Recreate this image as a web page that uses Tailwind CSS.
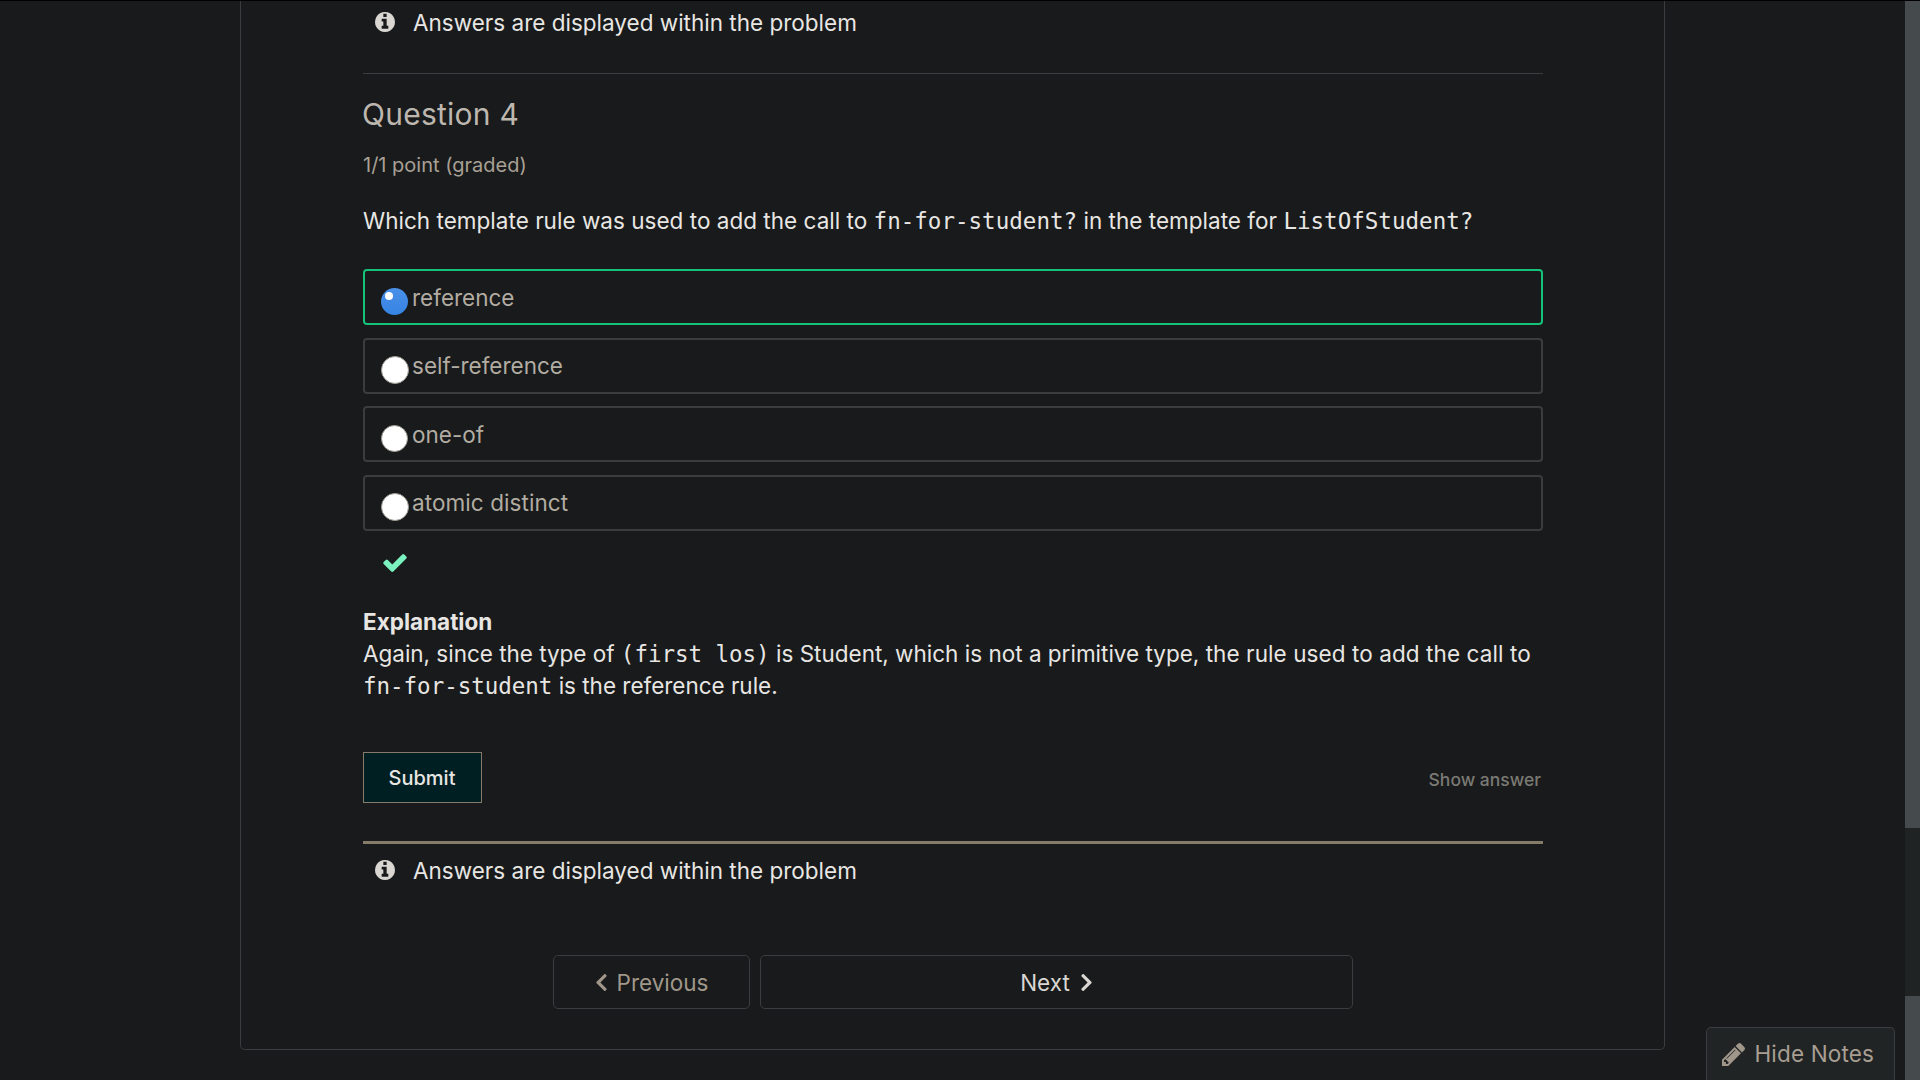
<!DOCTYPE html>
<html lang="en">
<head>
<meta charset="utf-8">
<title>Question 4</title>
<script src="https://cdn.jsdelivr.net/npm/@tailwindcss/browser@4"></script>
</head>
<body class="h-[1080px] w-[1920px] overflow-hidden border-t border-black bg-[#181a1b] font-['Inter',sans-serif] text-[22.5px] leading-8 text-[#e8e6e3]">
<svg class="hidden">
  <symbol id="info" viewBox="128 128 1536 1536"><path d="M1152 1376v-160q0-14-9-23t-23-9h-96v-512q0-14-9-23t-23-9h-320q-14 0-23 9t-9 23v160q0 14 9 23t23 9h96v320h-96q-14 0-23 9t-9 23v160q0 14 9 23t23 9h448q14 0 23-9t9-23zm-128-896v-192q0-14-9-23t-23-9h-192q-14 0-23 9t-9 23v192q0 14 9 23t23 9h192q14 0 23-9t9-23zm640 416q0 209-103 385.5t-279.5 279.5-385.5 103-385.5-103-279.5-279.5-103-385.5 103-385.5 279.5-279.5 385.5-103 385.5 103 279.5 279.5 103 385.5z"/></symbol>
  <symbol id="check" viewBox="121 334 1550 1188"><path d="M1671 566q0 40-28 68l-724 724-136 136q-28 28-68 28t-68-28l-136-136-362-362q-28-28-28-68t28-68l136-136q28-28 68-28t68 28l294 295 656-657q28-28 68-28t68 28l136 136q28 28 28 68z"/></symbol>
  <symbol id="pencil" viewBox="128 149 1515 1515"><path d="M491 1536l91-91-235-235-91 91v107h128v128h107zm523-928q0-22-22-22-10 0-17 7l-542 542q-7 7-7 17 0 22 22 22 10 0 17-7l542-542q7-7 7-17zm-54-192l416 416-832 832h-416v-416zm683 96q0 53-37 90l-166 166-416-416 166-165q36-38 90-38 53 0 91 38l235 234q37 39 37 91z"/></symbol>
  <symbol id="left" viewBox="27.5 37.6 265 436.800"><path d="M34.52 239.03L228.87 44.69c9.37-9.37 24.57-9.37 33.94 0l22.67 22.67c9.36 9.36 9.37 24.52.04 33.9L131.49 256l154.02 154.75c9.34 9.38 9.32 24.54-.04 33.9l-22.67 22.67c-9.37 9.37-24.57 9.37-33.94 0L34.52 272.97c-9.37-9.37-9.37-24.57 0-33.94z"/></symbol>
</svg>
<div class="flex h-[1079px] justify-between">
  <main class="ml-60 h-[1049px] w-[1425px] rounded-b-[5px] border border-t-0 border-[#3a3d3f] pl-[122px] pr-[121px] pt-1.5">
    <div class="flex h-8 items-center pl-3">
      <svg class="mb-0.5 h-5 w-5 fill-[#dad7d2]"><use href="#info"/></svg>
      <span class="ml-[18px]">Answers are displayed within the problem</span>
    </div>
    <hr class="mt-[34px] border-[#3b3e40]">
    <h3 class="mt-5 -ml-px text-[30px] leading-10 tracking-[0.25px] text-[#bdb7af]">Question 4</h3>
    <div class="mt-[17px] text-xl leading-7 text-[#a8a095]">1/1 point (graded)</div>
    <p class="mt-[26px] h-8 whitespace-nowrap tracking-[0.02px]">Which template rule was used to add the call to <code class="font-['DejaVu_Sans_Mono',monospace] leading-none">fn-for-student?</code> in the template for <code class="font-['DejaVu_Sans_Mono',monospace] leading-none">ListOfStudent?</code></p>
    <div class="mt-8 flex flex-col gap-[12.5px] text-[#b2aca2]">
      <label class="flex h-14 rounded-[4px] border-2 border-[#16c179] pl-4 pt-[11px]">
        <span class="mt-1.5 h-[27px] w-[27px] rounded-full bg-linear-to-b from-[#4a90e8] to-[#3584e4] pl-1 pt-1"><span class="block h-2 w-2 rounded-full bg-white"></span></span>
        <span class="ml-1">reference</span>
      </label>
      <label class="flex h-14 rounded-[4px] border-2 border-[#3a3c3e] pl-4 pt-[10.5px]">
        <span class="mt-1.5 h-7 w-7 rounded-full border border-[#9d9991] bg-white"></span>
        <span class="ml-[3px]">self-reference</span>
      </label>
      <label class="flex h-14 rounded-[4px] border-2 border-[#3a3c3e] pl-4 pt-[11px]">
        <span class="mt-1.5 h-[27px] w-[27px] rounded-full border border-[#9d9991] bg-white"></span>
        <span class="ml-1">one-of</span>
      </label>
      <label class="flex h-14 rounded-[4px] border-2 border-[#3a3c3e] pl-4 pt-[10.5px]">
        <span class="mt-1.5 h-7 w-7 rounded-full border border-[#9d9991] bg-white"></span>
        <span class="ml-[3px] tracking-[0.08px]">atomic distinct</span>
      </label>
    </div>
    <svg class="ml-5 mt-[23.5px] h-[18px] w-6 fill-[#7bf1c0]"><use href="#check"/></svg>
    <section class="mt-[34px] whitespace-nowrap">
      <div class="h-8 font-bold">Explanation</div>
      <div class="h-8"><span class="tracking-[-0.02px]">Again, since the type of <code class="font-['DejaVu_Sans_Mono',monospace] leading-none">(first los)</code></span> is Student, which is not a primitive type, <span class="tracking-[0.085px]">the rule used to add the call to</span></div>
      <div class="h-8 tracking-[-0.02px]"><code class="font-['DejaVu_Sans_Mono',monospace] leading-none">fn-for-student</code> is the reference rule.</div>
    </section>
    <div class="mt-[50px] flex h-[51px] items-center justify-between">
      <button class="h-[51px] w-[119px] border border-[#857b6b] bg-[#001f23] pr-px text-xl font-medium">Submit</button>
      <button class="mr-0.5 mt-[5px] text-[17.5px] font-medium text-[#7a7974]">Show answer</button>
    </div>
    <div class="mt-[38px] h-[3px] bg-[#857b69]"></div>
    <div class="mt-[11px] flex h-8 items-center pl-3">
      <svg class="mb-0.5 h-5 w-5 fill-[#dad7d2]"><use href="#info"/></svg>
      <span class="ml-[18px]">Answers are displayed within the problem</span>
    </div>
    <nav class="mt-[68px] flex w-[1180px] justify-center gap-2.5">
      <button class="flex h-[54px] w-[197px] items-center justify-center gap-2.5 rounded-[5px] border border-[#3a3d3f] pl-px pt-px text-[#a0978a]">
        <svg class="h-[17px] w-[11px] fill-current"><use href="#left"/></svg>Previous
      </button>
      <button class="flex h-[54px] w-[593px] items-center justify-center gap-[11px] rounded-[5px] border border-[#3a3d3f] pr-px pt-px text-[#dad7d2]">
        Next<svg class="h-[17px] w-[11px] rotate-180 fill-current"><use href="#left"/></svg>
      </button>
    </nav>
  </main>
  <div class="flex">
    <button class="mr-2.5 mt-auto flex h-[53px] w-[189px] items-center rounded-t-[5px] border border-b-0 border-[#3a3d3f] bg-[#202425] pl-[15px] text-[#a89e92]">
      <svg class="h-[23px] w-[23px] fill-[#a0968a]"><use href="#pencil"/></svg>
      <span class="ml-[9.5px] tracking-[0.15px]">Hide Notes</span>
    </button>
    <div class="flex w-[15px] flex-col bg-[#202324]">
      <div class="h-[827px] bg-[#454a4d]"></div>
      <div class="mt-auto h-[84px] bg-[#454a4d]"></div>
    </div>
  </div>
</div>
</body>
</html>
